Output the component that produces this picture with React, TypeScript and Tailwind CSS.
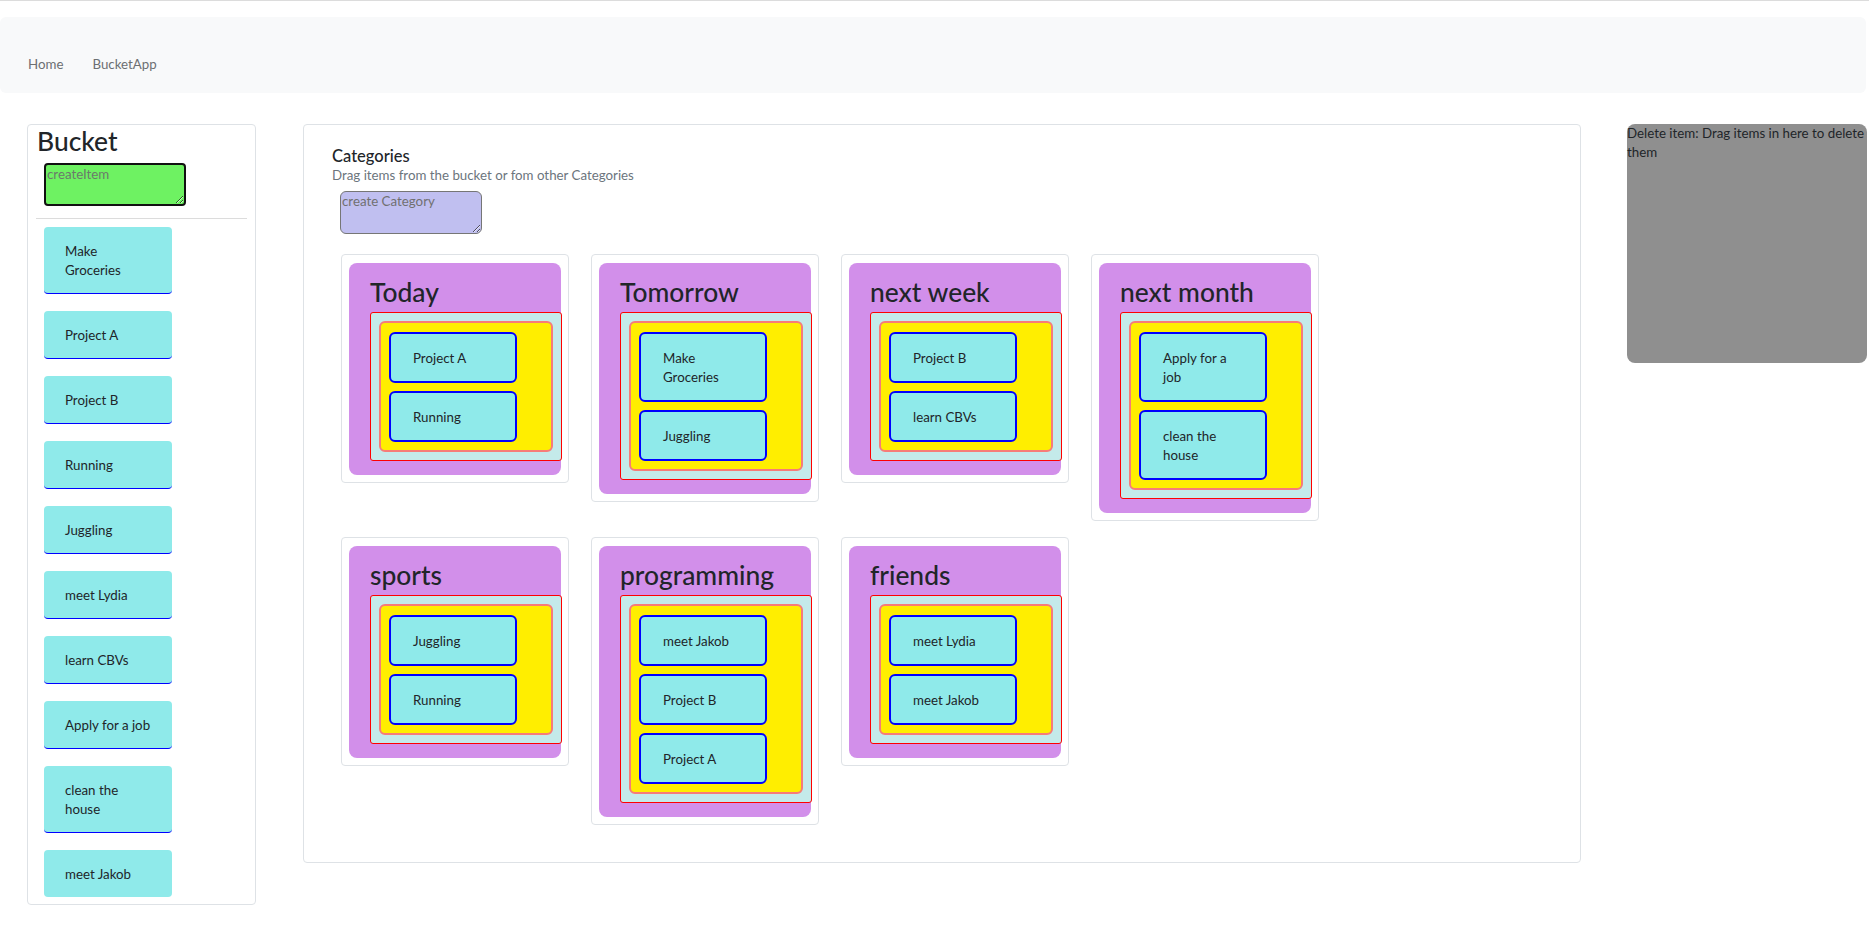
import React from 'react';

type Category = {
  title: string;
  items: string[];
};

// line breaks are kept as in the screenshot, so the wrap does not depend on the font
const bucketItems = [
  'Make\nGroceries',
  'Project A',
  'Project B',
  'Running',
  'Juggling',
  'meet Lydia',
  'learn CBVs',
  'Apply for a job',
  'clean the\nhouse',
  'meet Jakob',
];

const categories: Category[] = [
  { title: 'Today', items: ['Project A', 'Running'] },
  { title: 'Tomorrow', items: ['Make\nGroceries', 'Juggling'] },
  { title: 'next week', items: ['Project B', 'learn CBVs'] },
  { title: 'next month', items: ['Apply for a\njob', 'clean the\nhouse'] },
  { title: 'sports', items: ['Juggling', 'Running'] },
  { title: 'programming', items: ['meet Jakob', 'Project B', 'Project A'] },
  { title: 'friends', items: ['meet Lydia', 'meet Jakob'] },
];

const BucketItem: React.FC<{ label: string; last?: boolean }> = ({ label, last }) => (
  <div
    className={`ml-2 w-[128px] whitespace-pre rounded-[4px] bg-[#8feaea] pl-[21px] pt-[15px] pb-[13px] leading-[19px] ${
      last ? '' : 'border-b border-[#0000ff]'
    }`}
  >
    {label}
  </div>
);

const CategoryItem: React.FC<{ label: string }> = ({ label }) => (
  <div className="w-[128px] whitespace-pre rounded-md border-2 border-[#0000ff] bg-[#8feaea] pl-[22px] pt-[15px] pb-[13px] leading-[19px]">
    {label}
  </div>
);

const CategoryCard: React.FC<{ category: Category }> = ({ category }) => (
  <div className="rounded-[4px] border border-[#dee2e6] pt-2 px-[7px] pb-[7px]">
    <div className="rounded-lg bg-[#d28fea] pt-[14px] pl-[21px] pb-[14px]">
      <h2 className="mb-[4px] text-[26.4px] leading-[31px] font-medium">{category.title}</h2>
      <div className="-mr-px rounded-[3px] border border-[#ff0000] bg-[#c4eaea] p-2">
        <div className="flex flex-col gap-2 rounded-md border-2 border-[#f77b78] bg-[#ffee00] pl-2 pr-2 pt-[9px] pb-2">
          {category.items.map((item, i) => (
            <CategoryItem key={i} label={item} />
          ))}
        </div>
      </div>
    </div>
  </div>
);

export default function App() {
  return (
    <div className="min-h-[935px] bg-white text-[13.3px] text-[#212529] font-['Segoe_UI','Lato','Noto_Sans',sans-serif]">
      <div className="h-px bg-[#dcdcdc]" />

      {/* navbar */}
      <nav className="mt-4 mr-[3px] flex h-[76px] items-start gap-[29px] rounded-md bg-[#f8f9fa] pl-[28px] pt-[38px] leading-[19px] text-[#6c6f72]">
        <span>Home</span>
        <span>BucketApp</span>
      </nav>

      <div className="mt-[31px] flex items-start">
        {/* bucket */}
        <div className="ml-[27px] w-[229px] rounded-[4px] border border-[#dee2e6] px-2 pt-px pb-[7px]">
          <h2 className="mb-[6px] pl-px text-[26.4px] leading-[31px] font-medium">Bucket</h2>
          <textarea
            placeholder="createItem"
            className="ml-2 block h-[43px] w-[142px] rounded-[4px] border-2 border-[#111] bg-[#6ef262] px-px text-[13.3px] leading-[19px] placeholder:text-[#6b7a6b]"
          />
          <hr className="mt-[12px] mb-2 border-t border-[#dcdcdc]" />
          <div className="flex flex-col gap-[17px]">
            {bucketItems.map((item, i) => (
              <BucketItem key={i} label={item} last={i === bucketItems.length - 1} />
            ))}
          </div>
        </div>

        {/* categories */}
        <div className="ml-[47px] w-[1278px] rounded-[4px] border border-[#dee2e6] pl-[28px] pt-[22px] pb-[37px]">
          <h5 className="text-[16.5px] leading-[19px] font-medium">Categories</h5>
          <p className="leading-[19px] text-[#6c757d]">Drag items from the bucket or fom other Categories</p>
          <textarea
            placeholder="create Category"
            className="ml-2 mt-[6px] block h-[43px] w-[142px] rounded-md border border-[#767676] bg-[#c0bff0] px-px text-[13.3px] leading-[19px] placeholder:text-[#707070]"
          />
          <div className="ml-[9px] mt-[20px] grid grid-cols-[repeat(4,228px)] items-start gap-x-[22px] gap-y-[16px]">
            {categories.map((c) => (
              <CategoryCard key={c.title} category={c} />
            ))}
          </div>
        </div>

        {/* delete zone */}
        <div className="ml-[46px] h-[239px] w-[240px] rounded-lg bg-[#8f8f8f] leading-[19px]">
          Delete item: Drag items in here to delete them
        </div>
      </div>
    </div>
  );
}
